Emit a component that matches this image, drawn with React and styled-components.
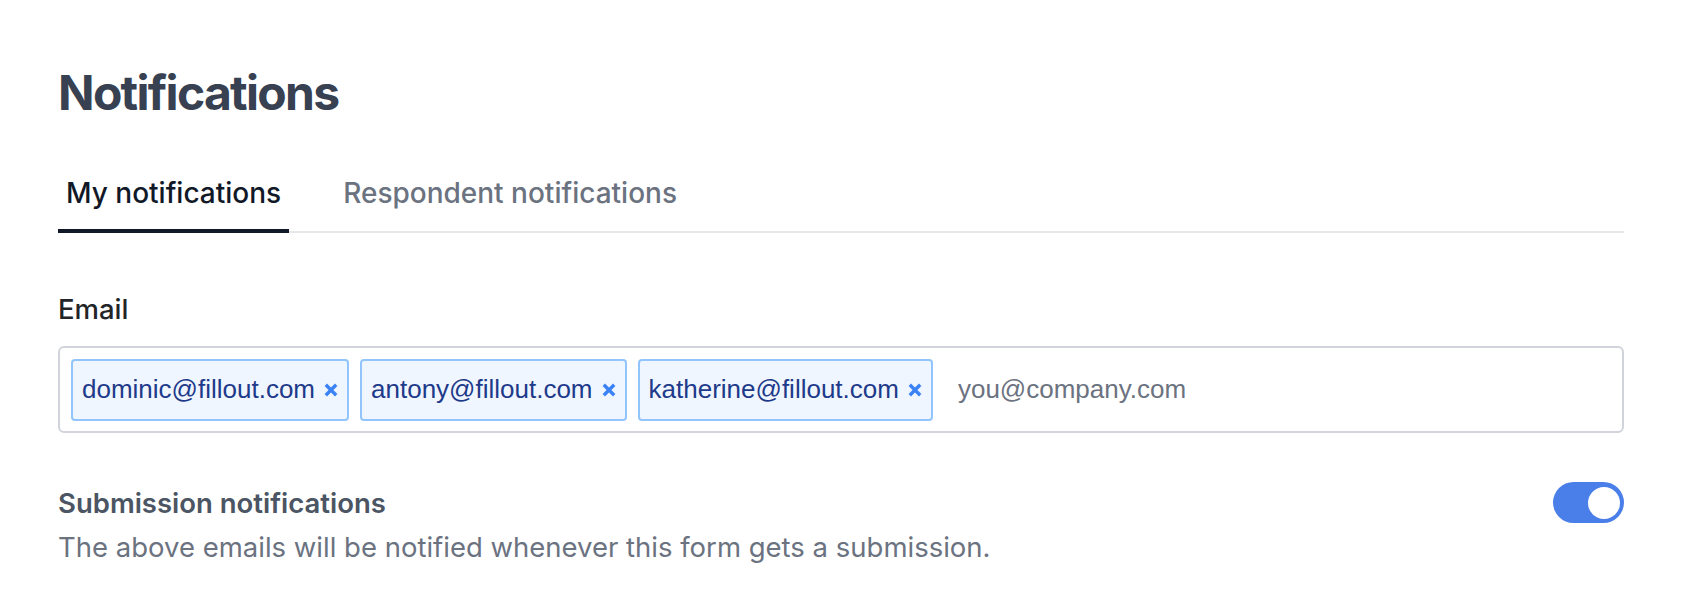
import React, { useState } from "react";
import styled, { createGlobalStyle } from "styled-components";

const GlobalStyle = createGlobalStyle`
  html, body {
    margin: 0;
    padding: 0;
    background: #ffffff;
    font-family: Inter, "Noto Sans", sans-serif;
  }
  * {
    box-sizing: border-box;
  }
`;

const Page = styled.div`
  width: 1566px;
  margin-left: 58px;
  padding-top: 64px;
`;

const Title = styled.h1`
  margin: 0;
  font-size: 48px;
  font-weight: 700;
  line-height: 58px;
  color: #374151;
  letter-spacing: -1.7px;
`;

const TabBar = styled.div`
  display: flex;
  margin-top: 54px;
  border-bottom: 2px solid #e5e7eb;
`;

const Tab = styled.button`
  border: none;
  background: none;
  font-family: Inter, sans-serif;
  font-size: 28px;
  line-height: 34px;
  font-weight: 500;
  padding: 0 8px 19px;
  margin-right: 46px;
  margin-bottom: -2px;
  color: ${(p) => (p.$active ? "#111827" : "#6b7280")};
  border-bottom: 4px solid ${(p) => (p.$active ? "#111827" : "transparent")};
  cursor: pointer;
`;

const Section = styled.div`
  margin-top: 59px;
`;

const Label = styled.div`
  font-size: 27.5px;
  font-weight: 500;
  color: #222427;
  line-height: 34px;
`;

const TagInput = styled.div`
  margin-top: 20px;
  height: 87px;
  border: 2px solid #d1d5db;
  border-radius: 6px;
  display: flex;
  align-items: center;
  gap: 11px;
  padding: 0 11px;
`;

const Chip = styled.div`
  height: 62px;
  display: flex;
  align-items: center;
  gap: 9px;
  padding: 0 9px;
  background: #eff6ff;
  border: 2px solid #93c5fd;
  border-radius: 4px;
  font-family: "Liberation Sans", Arial, sans-serif;
  font-size: 26px;
  color: #1e3a8a;
`;

const Remove = styled.span`
  display: flex;
  align-items: center;
  color: #3b82f6;
  cursor: pointer;
`;

const EmailField = styled.input`
  flex: 1;
  border: none;
  outline: none;
  margin-left: 14px;
  padding: 0;
  font-family: "Liberation Sans", Arial, sans-serif;
  font-size: 26px;
  color: #1f2937;
  &::placeholder {
    color: #6b7280;
  }
`;

const SettingRow = styled.div`
  margin-top: 49px;
  display: flex;
  justify-content: space-between;
  align-items: center;
`;

const SettingTitle = styled.div`
  font-size: 27.5px;
  font-weight: 600;
  color: #4b5563;
  line-height: 34px;
`;

const SettingDesc = styled.div`
  margin-top: 7px;
  font-size: 27.5px;
  font-weight: 400;
  color: #6b7280;
  line-height: 34px;
`;

const Toggle = styled.button`
  width: 71px;
  height: 41px;
  border: none;
  border-radius: 999px;
  background: ${(p) => (p.$on ? "#4a7fea" : "#d1d5db")};
  padding: 0 4px;
  display: flex;
  align-items: center;
  justify-content: ${(p) => (p.$on ? "flex-end" : "flex-start")};
  cursor: pointer;
`;

const Knob = styled.span`
  width: 32px;
  height: 32px;
  border-radius: 50%;
  background: #ffffff;
`;

const XIcon = () => (
  <svg width="14" height="14" viewBox="0 0 14 14">
    <path
      d="M1.8 1.8 L12.2 12.2 M12.2 1.8 L1.8 12.2"
      stroke="currentColor"
      strokeWidth="3.4"
      strokeLinecap="butt"
    />
  </svg>
);

const emails = ["dominic@fillout.com", "antony@fillout.com", "katherine@fillout.com"];

export default function App() {
  const [on, setOn] = useState(true);
  return (
    <>
      <GlobalStyle />
      <Page>
        <Title>Notifications</Title>
        <TabBar>
          <Tab $active>My notifications</Tab>
          <Tab>Respondent notifications</Tab>
        </TabBar>
        <Section>
          <Label>Email</Label>
          <TagInput>
            {emails.map((e) => (
              <Chip key={e}>
                {e}
                <Remove>
                  <XIcon />
                </Remove>
              </Chip>
            ))}
            <EmailField placeholder="you@company.com" />
          </TagInput>
        </Section>
        <SettingRow>
          <SettingTitle>Submission notifications</SettingTitle>
          <Toggle $on={on} onClick={() => setOn(!on)}>
            <Knob />
          </Toggle>
        </SettingRow>
        <SettingDesc>
          The above emails will be notified whenever this form gets a submission.
        </SettingDesc>
      </Page>
    </>
  );
}
